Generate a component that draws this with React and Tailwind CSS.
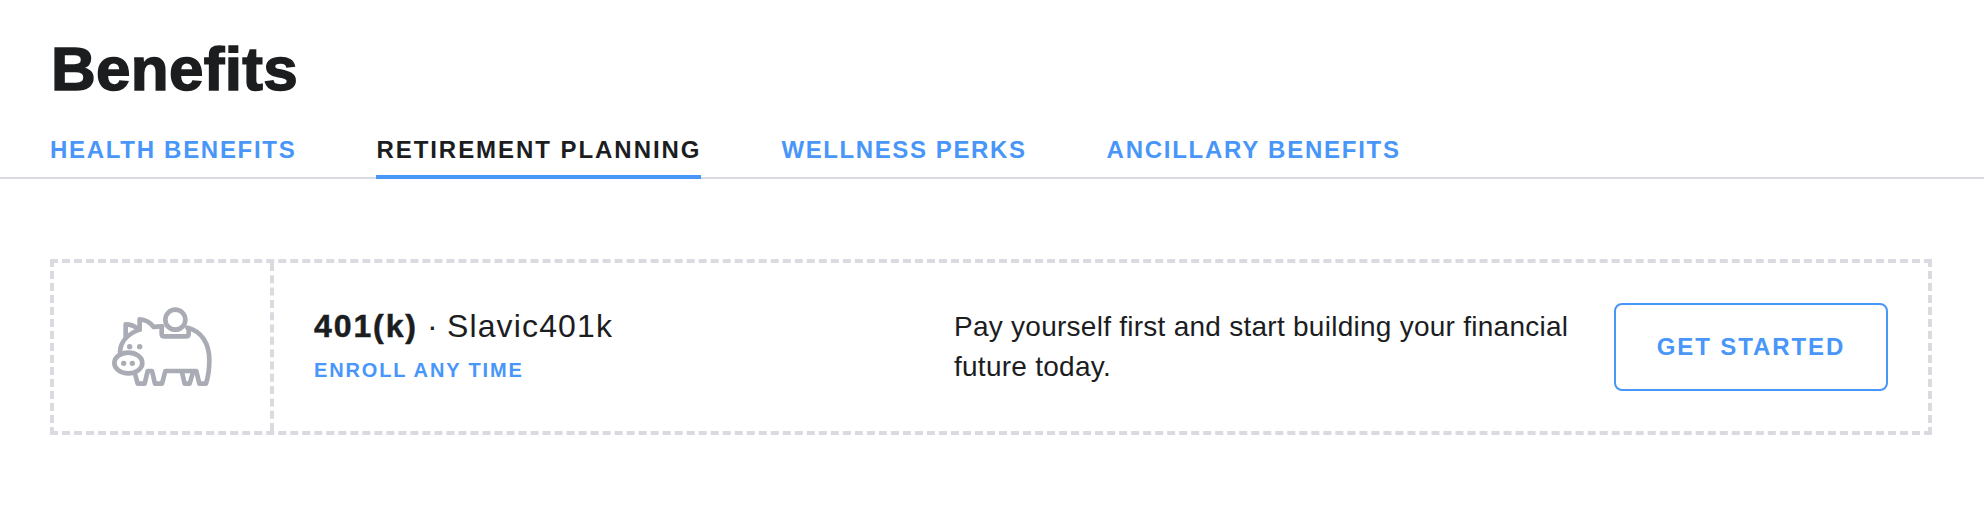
import React, { useState } from 'react';

const TABS = [
  { id: 'health', label: 'Health Benefits', tracking: 'tracking-[1.7px]' },
  { id: 'retirement', label: 'Retirement Planning', tracking: 'tracking-[1.95px]' },
  { id: 'wellness', label: 'Wellness Perks', tracking: 'tracking-[1.6px]' },
  { id: 'ancillary', label: 'Ancillary Benefits', tracking: 'tracking-[1.75px]' },
];

function PiggyBank() {
  return (
    <svg
      width="130"
      height="100"
      viewBox="-9 6 390 300"
      fill="none"
      stroke="#a9acb4"
      strokeWidth="14"
      strokeLinecap="round"
      strokeLinejoin="round"
    >
      {/* coin and slot */}
      <circle cx="226" cy="74" r="30" />
      <path d="M185 97v19q0 8 8 8h65q8 0 8-8v-17" />
      {/* ears, head and back */}
      <path d="M60 170C62 140 84 116 119 104" />
      <path d="M77 128V88C92 88 104 93 114 102" />
      <path d="M119 104V73C139 74 152 84 161 96C168 94 177 94 187 94" />
      <path d="M262 98C305 108 328 146 328 195C328 224 323 250 318 266H298L289 228H196L186 266H165L156 228H143L134 266H113L106 240" />
      <path d="M246 232L254 266H269L279 232" />
      {/* snout */}
      <ellipse cx="85" cy="204" rx="42" ry="31" />
      <g fill="#a9acb4" stroke="none">
        <circle cx="71" cy="205" r="8" />
        <circle cx="97" cy="205" r="8" />
        <circle cx="89" cy="155" r="8" />
        <circle cx="119" cy="155" r="8" />
      </g>
    </svg>
  );
}

export default function App() {
  const [activeTab, setActiveTab] = useState('retirement');

  return (
    <div className="min-h-screen bg-white pt-[37px] font-['Liberation_Sans',Arial,sans-serif] text-[#1c1d1f]">
      <h1 className="pl-[51px] text-[62px] leading-[64px] font-bold tracking-[0.3px] [-webkit-text-stroke:1.5px_#1c1d1f]">
        Benefits
      </h1>

      <nav className="mt-[37px] flex h-[41px] gap-20 px-[50px] shadow-[inset_0_-2px_0_#dadbe0]">
        {TABS.map((tab) => (
          <button
            key={tab.id}
            onClick={() => setActiveTab(tab.id)}
            className={`flex items-start border-b-4 text-2xl leading-6 font-bold whitespace-nowrap uppercase ${tab.tracking} ${
              activeTab === tab.id ? 'border-[#4896f9]' : 'border-transparent text-[#4896f9]'
            }`}
          >
            {tab.label}
          </button>
        ))}
      </nav>

      <div className="mt-20 mr-[52px] ml-[50px] flex h-44 border-4 border-dashed border-[#dadbe0]">
        <div className="flex w-[220px] shrink-0 items-center justify-center border-r-4 border-dashed border-[#dadbe0]">
          <PiggyBank />
        </div>

        <div className="flex flex-1 items-center pr-10 pl-10">
          <div className="w-[640px] shrink-0 pb-1.5">
            <div className="flex text-[32px] leading-10">
              <span className="font-bold tracking-[1.9px] [-webkit-text-stroke:0.5px_#1c1d1f]">401(k)</span>
              <span className="w-[29px] text-center leading-10">·</span>
              <span className="tracking-[1.15px]">Slavic401k</span>
            </div>
            <div className="mt-3 text-xl leading-6 font-bold tracking-[1.85px] text-[#4896f9] uppercase">
              Enroll any time
            </div>
          </div>

          <p className="w-[640px] text-[28px] leading-10 tracking-[0.26px]">
            Pay yourself first and start building your financial future today.
          </p>

          <button className="ml-auto h-[88px] w-[274px] shrink-0 rounded-lg border-2 border-[#4896f9] text-2xl font-bold tracking-[1.9px] text-[#4896f9] uppercase">
            Get started
          </button>
        </div>
      </div>
    </div>
  );
}
